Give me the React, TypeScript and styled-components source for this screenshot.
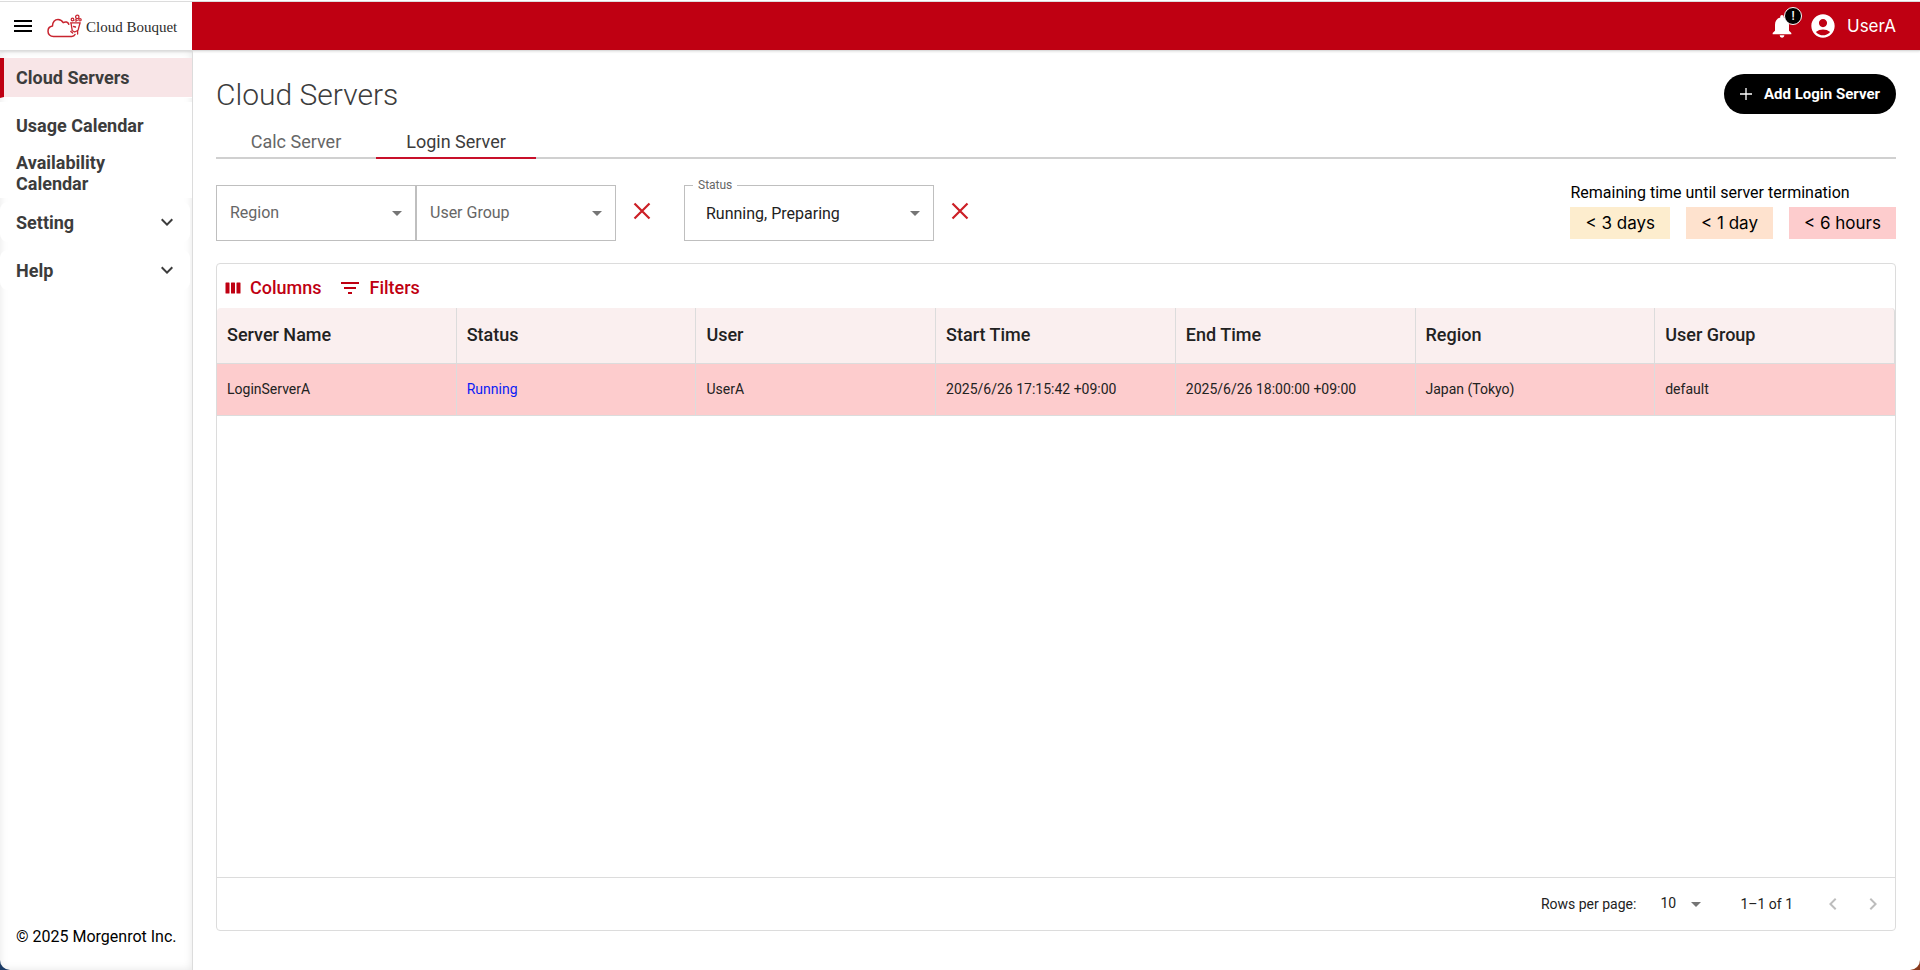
import React from "react";
import styled, { createGlobalStyle } from "styled-components";
import {
  MdAccountCircle,
  MdArrowDropDown,
  MdFilterList,
  MdKeyboardArrowDown,
  MdKeyboardArrowLeft,
  MdKeyboardArrowRight,
  MdMenu,
  MdNotifications,
} from "react-icons/md";

const RED = "#bf0012";
const LINE = "#dcdcdc";

const GlobalStyle = createGlobalStyle`
  *, *::before, *::after { box-sizing: border-box; }
  html { background: linear-gradient(90deg, #1c3c66 0 50%, #8a3a1c 50% 100%); }
  body {
    margin: 0;
    color: #000;
    font-family: Roboto, "Liberation Sans", sans-serif;
    font-size: 16px;
  }
  button, select { font: inherit; color: inherit; }
  button { padding: 0; border: 0; background: none; cursor: pointer; }
  svg { display: block; flex: none; }
`;

const Shell = styled.div`
  display: flex;
  flex-direction: column;
  min-height: 100vh;
  overflow: hidden;
  border-radius: 0 0 10px 10px;
  background: #fff;
`;

const Header = styled.header`
  display: flex;
  height: 51px;
  padding-top: 1px;
  border-bottom: 1px solid ${LINE};
  box-shadow: 0 1px 2px rgba(0, 0, 0, 0.1);
`;

const Brand = styled.div`
  display: flex;
  align-items: center;
  flex: none;
  width: 192px;
  padding-left: 11px;
  gap: 12px;
  border-top: 1px solid ${LINE};
`;

const LogoLink = styled.a`
  display: flex;
  align-items: center;
  gap: 4px;
  color: #2c2c2c;
  font-family: "Liberation Serif", serif;
  font-size: 15px;
  line-height: 24px;
  text-decoration: none;
  white-space: nowrap;

  & > span { padding-top: 2px; }
`;

const TopBar = styled.div`
  display: flex;
  align-items: center;
  justify-content: flex-end;
  flex: 1;
  gap: 13px;
  padding-right: 24px;
  border-top: 1px solid ${LINE};
  background: ${RED};
  color: #fff;
`;

const BellButton = styled.button`
  position: relative;
  color: #fff;
`;

const Badge = styled.span`
  position: absolute;
  top: -5px;
  right: -6px;
  width: 18px;
  height: 18px;
  border: 1px solid #fff;
  border-radius: 50%;
  background: #000;
  font-size: 12px;
  font-weight: 500;
  line-height: 16px;
  text-align: center;
`;

const Account = styled.button`
  display: flex;
  align-items: center;
  gap: 10px;
  font-family: Inter, sans-serif;
  font-size: 17px;
  line-height: 24px;
`;

const Body = styled.div`
  display: flex;
  flex: 1;
`;

const Sidebar = styled.aside`
  display: flex;
  flex-direction: column;
  justify-content: space-between;
  flex: none;
  width: 193px;
  padding: 3px 0 21px;
  border-right: 1px solid ${LINE};
  box-shadow: inset 0 0 8px rgba(0, 0, 0, 0.1);
`;

const NavList = styled.ul`
  margin: 0;
  padding: 0;
  list-style: none;
`;

const NavItem = styled.li`
  display: flex;
  align-items: center;
  height: 48px;
`;

const NavLink = styled.a<{ $active?: boolean }>`
  display: flex;
  align-items: center;
  width: 100%;
  min-height: ${(p) => (p.$active ? 40 : 48)}px;
  padding: 0 40px 1px ${(p) => (p.$active ? 12 : 16)}px;
  border-left: ${(p) => (p.$active ? `4px solid ${RED}` : "0")};
  border-bottom: 1px solid #fff;
  background: ${(p) => (p.$active ? "#f8e5e7" : "#fff")};
  color: #3c3c3c;
  font-size: 18px;
  font-weight: 700;
  line-height: 21px;
  text-decoration: none;
`;

const NavGroup = styled.button`
  display: flex;
  align-items: center;
  justify-content: space-between;
  width: 190px;
  height: 40px;
  padding: 0 11px 0 16px;
  border-radius: 8px;
  background: #fff;
  color: #3c3c3c;
  font-size: 18px;
  font-weight: 700;
  line-height: 21px;
`;

const Copyright = styled.p`
  margin: 0;
  padding-left: 16px;
  line-height: 24px;
`;

const Main = styled.main`
  display: flex;
  flex-direction: column;
  flex: 1;
  min-width: 0;
  padding: 23px 24px 39px 23px;
`;

const TitleRow = styled.div`
  display: flex;
  align-items: center;
  justify-content: space-between;
  height: 40px;
`;

const Title = styled.h1`
  margin: 0;
  padding-top: 2px;
  color: #3c3c3c;
  font-size: 30px;
  font-weight: 300;
  line-height: 38px;
`;

const AddButton = styled.button`
  display: flex;
  align-items: center;
  gap: 12px;
  height: 40px;
  padding: 0 16px;
  border-radius: 20px;
  background: #000;
  color: #fff;
  font-size: 15px;
  font-weight: 700;
`;

const Tabs = styled.div`
  display: flex;
  height: 45px;
  border-bottom: 2px solid #d0d0d0;
`;

const Tab = styled.button<{ $active?: boolean }>`
  width: 160px;
  height: 45px;
  padding-top: 12px;
  border-bottom: 2px solid ${(p) => (p.$active ? "#c8102a" : "transparent")};
  color: ${(p) => (p.$active ? "#3c3c3c" : "#666")};
  font-size: 18px;
  line-height: 30px;
`;

const FilterRow = styled.div`
  display: flex;
  align-items: flex-start;
  justify-content: space-between;
  padding: 26px 0 22px;
`;

const Filters = styled.div`
  display: flex;
  align-items: center;
`;

const Field = styled.div<{ $wide?: boolean }>`
  position: relative;
  display: flex;
  align-items: center;
  width: ${(p) => (p.$wide ? 250 : 200)}px;
  height: 56px;
  border: 1px solid #bfbfbf;
  color: #757575;

  & > select {
    width: 100%;
    height: 100%;
    padding: ${(p) => (p.$wide ? "0 40px 0 21px" : "0 40px 2px 13px")};
    border: 0;
    background: none;
    appearance: none;
    color: ${(p) => (p.$wide ? "#222" : "#666")};
  }

  & > svg {
    position: absolute;
    right: 6px;
    pointer-events: none;
  }
`;

const FieldLabel = styled.label`
  position: absolute;
  top: -9px;
  left: 8px;
  padding: 0 5px;
  background: #fff;
  color: #666;
  font-size: 12px;
  line-height: 16px;
`;

const ClearButton = styled.button`
  display: flex;
  align-items: center;
  justify-content: center;
  width: 52px;
  height: 40px;
  margin: 0 16px 4px 0;
`;

const Legend = styled.div`
  display: flex;
  flex-direction: column;
  gap: 6px;
  line-height: 16px;
`;

const Chips = styled.div`
  display: flex;
  gap: 16px;
`;

const Chip = styled.span<{ $color: string }>`
  padding: 0 15px;
  background: ${(p) => p.$color};
  font-family: Inter, sans-serif;
  font-size: 17px;
  line-height: 32px;
`;

const Grid = styled.section`
  display: flex;
  flex-direction: column;
  flex: 1;
  border: 1px solid ${LINE};
  border-radius: 4px;
`;

const Toolbar = styled.div`
  display: flex;
  align-items: center;
  gap: 16px;
  height: 44px;
  padding: 4px 8px 0;
`;

const ToolButton = styled.button`
  display: flex;
  align-items: center;
  gap: 8px;
  color: ${RED};
  font-size: 18px;
  font-weight: 500;
  line-height: 24px;
`;

const Table = styled.table`
  width: 100%;
  border-collapse: separate;
  border-spacing: 0;
  table-layout: fixed;
`;

const HeadCell = styled.th`
  height: 56px;
  padding: 0 10px 2px;
  border-right: 1px solid ${LINE};
  border-bottom: 1px solid ${LINE};
  background: #faefef;
  color: #222;
  font-size: 18px;
  font-weight: 500;
  text-align: left;

  &:first-child { border-top-left-radius: 4px; }
  &:last-child { border-top-right-radius: 4px; }
`;

const Cell = styled.td<{ $link?: boolean }>`
  height: 52px;
  padding: 0 10px 2px;
  border-right: 1px solid ${LINE};
  border-bottom: 1px solid ${LINE};
  background: #fdcccd;
  color: ${(p) => (p.$link ? "#0a1cf5" : "#222")};
  font-size: 14px;
  white-space: nowrap;

  &:last-child { border-right: 0; }
`;

const Pagination = styled.footer`
  display: flex;
  align-items: center;
  justify-content: flex-end;
  height: 53px;
  margin-top: auto;
  padding-right: 10px;
  border-top: 1px solid ${LINE};
  color: #222;
  font-size: 14px;
`;

const PageSize = styled.div`
  position: relative;
  display: flex;
  align-items: center;
  margin: 0 32px 0 16px;
  color: #757575;

  & > select {
    width: 56px;
    padding: 0 24px 2px 8px;
    border: 0;
    background: none;
    appearance: none;
    color: #222;
  }

  & > svg {
    position: absolute;
    right: 0;
    pointer-events: none;
  }
`;

const PageButtons = styled.div`
  display: flex;
  gap: 16px;
  padding-left: 28px;
`;

const columns = ["Server Name", "Status", "User", "Start Time", "End Time", "Region", "User Group"];

const rows = [
  [
    "LoginServerA",
    "Running",
    "UserA",
    "2025/6/26 17:15:42 +09:00",
    "2025/6/26 18:00:00 +09:00",
    "Japan (Tokyo)",
    "default",
  ],
];

const legend = [
  { text: "< 3 days", color: "#fdedce" },
  { text: "< 1 day", color: "#fee2ce" },
  { text: "< 6 hours", color: "#fdcccd" },
];

const LogoMark = () => (
  <svg width="35" height="24" viewBox="0 0 35 24" fill="none" stroke="#c8242f" strokeLinecap="round" strokeLinejoin="round">
    <path
      strokeWidth="1.5"
      d="M28 20.5c-.6 1.3-1.7 1.9-3.3 1.900H6.500C3.200 22.400 1 20.300 1 17.200c0-2.800 1.800-4.700 4.500-5.100C5.300 7.800 8 5.400 11 5.400c2.400 0 4.100 1.200 5.200 3.200 2.300-1.400 4.900-.6 5.600 1.700"
    />
    <path strokeWidth="1.3" d="M23.500 8.800h9.800M24 9l1.200 7.400M33 9l-2 7.400M23.800 17.400l1.900 1.700M30.600 16.500v3.500M25 16.500l2.700 1.500 2.900-1.500M26.500 12.500l2 .5" />
    <circle cx="25.5" cy="5.5" r="1.3" strokeWidth="1.2" />
    <circle cx="30.3" cy="2.9" r="1.7" strokeWidth="1.3" />
    <circle cx="33" cy="5.8" r="1.2" strokeWidth="1.2" />
    <circle cx="29" cy="6.4" r="1" strokeWidth="1" />
  </svg>
);

const CrossIcon = () => (
  <svg width="18" height="18" viewBox="0 0 18 18" stroke="#cc1f26" strokeWidth="2.2">
    <path d="M1.5 1.5l15 15M16.5 1.5l-15 15" />
  </svg>
);

const PlusIcon = () => (
  <svg width="12" height="12" viewBox="0 0 12 12" stroke="currentColor" strokeWidth="1.3">
    <path d="M6 0v12M0 6h12" />
  </svg>
);

const ColumnsIcon = () => (
  <svg width="17" height="18" viewBox="0 0 17 18" fill="currentColor">
    <rect x="0.5" y="3.5" width="4" height="11" rx="0.5" />
    <rect x="6" y="3.5" width="4" height="11" rx="0.5" />
    <rect x="11.5" y="3.5" width="4" height="11" rx="0.5" />
  </svg>
);

export default function App() {
  return (
    <>
      <GlobalStyle />
      <Shell>
        <Header>
          <Brand>
            <button aria-label="Menu">
              <MdMenu size={24} />
            </button>
            <LogoLink href="#">
              <LogoMark />
              <span>Cloud Bouquet</span>
            </LogoLink>
          </Brand>
          <TopBar>
            <BellButton aria-label="Notifications">
              <MdNotifications size={28} />
              <Badge>!</Badge>
            </BellButton>
            <Account>
              <MdAccountCircle size={28} />
              UserA
            </Account>
          </TopBar>
        </Header>
        <Body>
          <Sidebar>
            <nav>
              <NavList>
                <NavItem>
                  <NavLink href="#" $active aria-current="page">Cloud Servers</NavLink>
                </NavItem>
                <NavItem>
                  <NavLink href="#">Usage&nbsp;Calendar</NavLink>
                </NavItem>
                <NavItem>
                  <NavLink href="#">Availability Calendar</NavLink>
                </NavItem>
                {["Setting", "Help"].map((name) => (
                  <NavItem key={name}>
                    <NavGroup aria-expanded="false">
                      {name}
                      <MdKeyboardArrowDown size={24} />
                    </NavGroup>
                  </NavItem>
                ))}
              </NavList>
            </nav>
            <Copyright>© 2025 Morgenrot Inc.</Copyright>
          </Sidebar>
          <Main>
            <TitleRow>
              <Title>Cloud Servers</Title>
              <AddButton>
                <PlusIcon />
                Add Login Server
              </AddButton>
            </TitleRow>
            <Tabs role="tablist">
              <Tab role="tab" aria-selected="false">Calc Server</Tab>
              <Tab role="tab" aria-selected="true" $active>Login Server</Tab>
            </Tabs>
            <FilterRow>
              <Filters>
                <Field>
                  <select aria-label="Region">
                    <option>Region</option>
                  </select>
                  <MdArrowDropDown size={24} />
                </Field>
                <Field>
                  <select aria-label="User Group">
                    <option>User Group</option>
                  </select>
                  <MdArrowDropDown size={24} />
                </Field>
                <ClearButton aria-label="Clear region and user group">
                  <CrossIcon />
                </ClearButton>
                <Field $wide>
                  <FieldLabel htmlFor="status">Status</FieldLabel>
                  <select id="status">
                    <option>Running, Preparing</option>
                  </select>
                  <MdArrowDropDown size={24} />
                </Field>
                <ClearButton aria-label="Clear status">
                  <CrossIcon />
                </ClearButton>
              </Filters>
              <Legend>
                Remaining time until server termination
                <Chips>
                  {legend.map((item) => (
                    <Chip key={item.text} $color={item.color}>{item.text}</Chip>
                  ))}
                </Chips>
              </Legend>
            </FilterRow>
            <Grid>
              <Toolbar>
                <ToolButton>
                  <ColumnsIcon />
                  Columns
                </ToolButton>
                <ToolButton>
                  <MdFilterList size={24} />
                  Filters
                </ToolButton>
              </Toolbar>
              <Table>
                <thead>
                  <tr>
                    {columns.map((name) => (
                      <HeadCell key={name} scope="col">{name}</HeadCell>
                    ))}
                  </tr>
                </thead>
                <tbody>
                  {rows.map((row) => (
                    <tr key={row[0]}>
                      {row.map((value, i) => (
                        <Cell key={columns[i]} $link={columns[i] === "Status"}>{value}</Cell>
                      ))}
                    </tr>
                  ))}
                </tbody>
              </Table>
              <Pagination>
                <label htmlFor="page-size">Rows per page:</label>
                <PageSize>
                  <select id="page-size">
                    <option>10</option>
                  </select>
                  <MdArrowDropDown size={24} />
                </PageSize>
                1–1 of 1
                <PageButtons>
                  <button aria-label="Previous page" disabled>
                    <MdKeyboardArrowLeft size={24} color="#bdbdbd" />
                  </button>
                  <button aria-label="Next page" disabled>
                    <MdKeyboardArrowRight size={24} color="#bdbdbd" />
                  </button>
                </PageButtons>
              </Pagination>
            </Grid>
          </Main>
        </Body>
      </Shell>
    </>
  );
}
